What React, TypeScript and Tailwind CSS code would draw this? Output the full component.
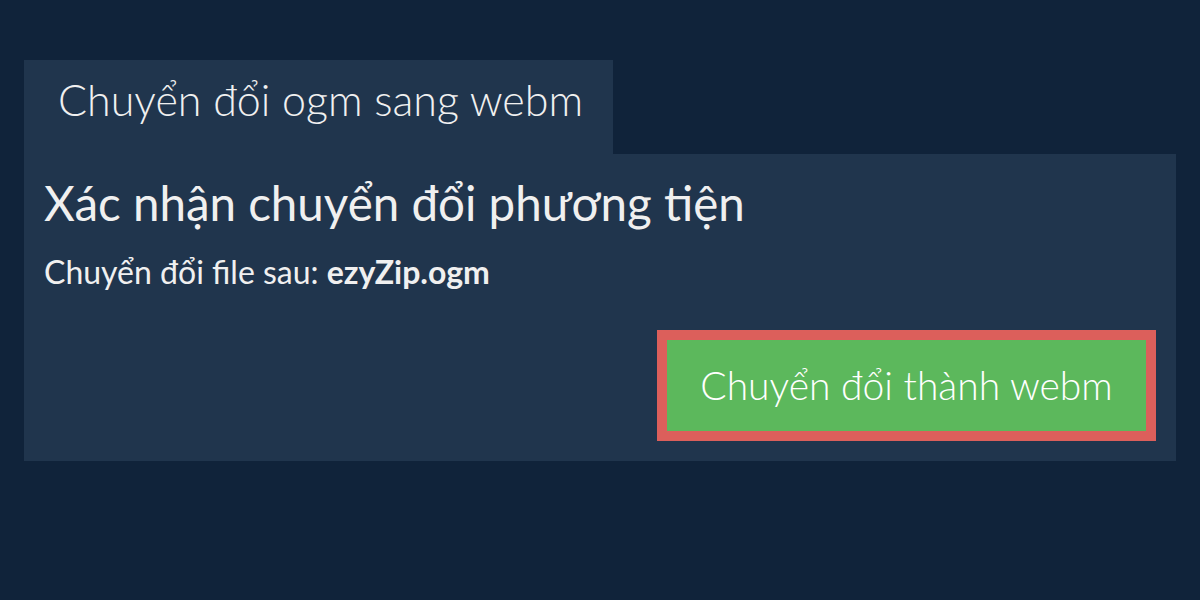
export default function App() {
  return (
    <div className="h-[600px] w-[1200px] bg-[#10233a] px-6 pt-[60px] text-[#f0f0f0] [font-family:Lato,'Liberation_Sans',sans-serif]">
      <div className="flex">
        <div className="h-[94px] w-[589px] bg-[#20354d] pl-[34px] pt-[14px] text-[43px] font-light leading-[52px]">
          Chuyển đổi ogm sang webm
        </div>
      </div>
      <div className="flex h-[307px] flex-col bg-[#20354d] px-5 pt-[22px]">
        <h1 className="text-[47.5px] font-normal leading-[53px]">Xác nhận chuyển đổi phương tiện</h1>
        <p className="mt-[24px] text-[32px] font-normal leading-[38px]">
          Chuyển đổi file sau: <b className="font-bold">ezyZip.ogm</b>
        </p>
        <div className="mt-[39px] flex justify-end">
          <button className="flex h-[111px] w-[499px] items-center justify-center border-[10px] border-[#dc5f5b] bg-[#5cb85c] text-[39px] font-light text-white">
            Chuyển đổi thành webm
          </button>
        </div>
      </div>
    </div>
  );
}
